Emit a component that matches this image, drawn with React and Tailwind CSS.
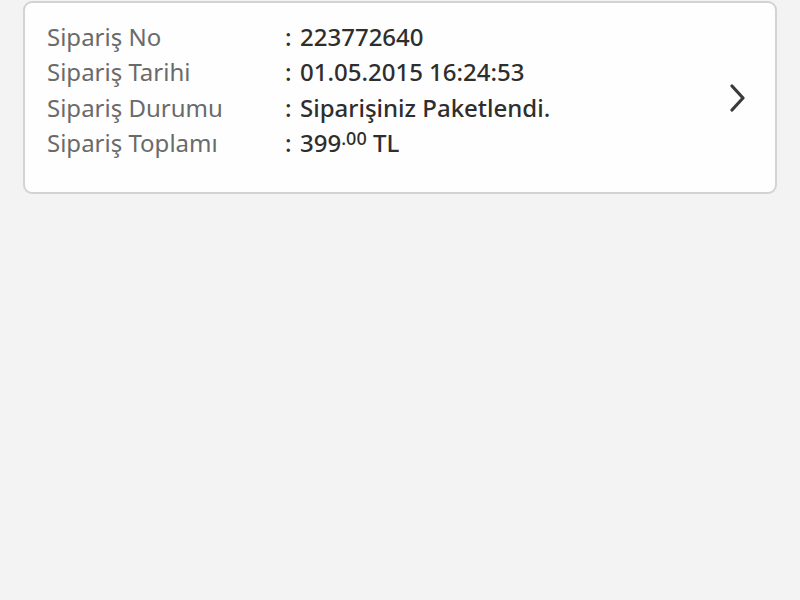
import React from "react";

const rows = [
  { label: "Sipariş No", value: "223772640" },
  { label: "Sipariş Tarihi", value: "01.05.2015 16:24:53" },
  { label: "Sipariş Durumu", value: "Siparişiniz Paketlendi." },
];

const OrderCard = () => {
  return (
    <div className="mx-[23px] mt-px rounded-[9px] border-2 border-[#d3d3d3] bg-[#fefefe] flex items-center pl-[22px] pr-[28px] pt-[16px] pb-[31px]">
      <div className="flex-1">
        {rows.map((r) => (
          <div key={r.label} className="flex items-center h-[35.5px]">
            <div className="w-[238px] text-[24px] text-[#6a6a6a]">{r.label}</div>
            <div className="text-[24px] font-medium text-[#2e2e2e] w-[15px]">:</div>
            <div className="text-[24px] font-medium text-[#2e2e2e]">{r.value}</div>
          </div>
        ))}
        <div className="flex items-center h-[35.5px]">
          <div className="w-[238px] text-[24px] text-[#6a6a6a]">Sipariş Toplamı</div>
          <div className="text-[24px] font-medium text-[#2e2e2e] w-[15px]">:</div>
          <div className="text-[24px] font-medium text-[#2e2e2e]">
            399<span className="text-[18px] relative -top-[7px]">.00</span>{" "}TL
          </div>
        </div>
      </div>
      <svg width="18" height="28" viewBox="0 0 18 28" fill="none" className="mt-[15px]">
        <path d="M3 2 L14 14 L3 26" stroke="#3a3a3a" strokeWidth="3.2" strokeLinecap="round" strokeLinejoin="round" />
      </svg>
    </div>
  );
};

export default function App() {
  return (
    <div className="w-[800px] h-[600px] bg-[#f3f3f3] overflow-hidden" style={{ fontFamily: '"Noto Sans", Roboto, sans-serif' }}>
      <OrderCard />
    </div>
  );
}
